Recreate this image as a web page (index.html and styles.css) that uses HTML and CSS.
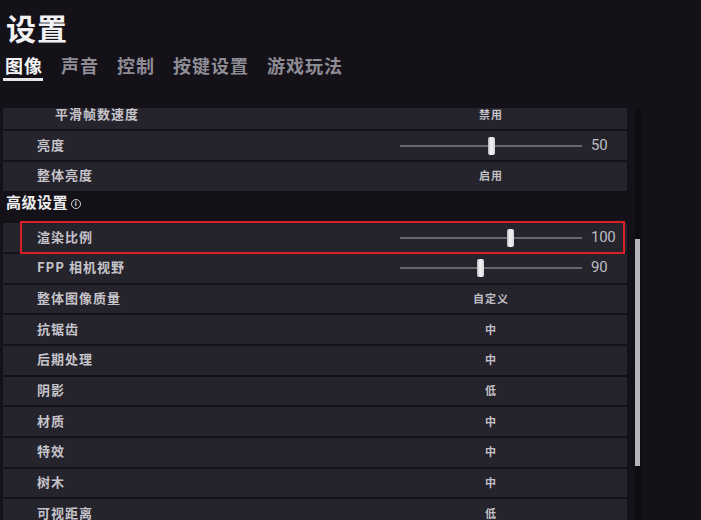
FILE: index.html
```html
<!DOCTYPE html>
<html lang="zh-CN">
<head>
    <meta charset="UTF-8">
    <meta name="viewport" content="width=device-width, initial-scale=1.0">
    <title>设置</title>
    <link rel="stylesheet" href="styles.css">
</head>
<body>
    <div class="header">
        <h1 class="title">设置</h1>
        <div class="tabs">
            <span class="tab active">图像</span>
            <span class="tab">声音</span>
            <span class="tab">控制</span>
            <span class="tab">按键设置</span>
            <span class="tab">游戏玩法</span>
        </div>
    </div>

    <div class="content">
        <div class="list">
            <div class="row sub">
                <span class="label">平滑帧数速度</span>
                <span class="value">禁用</span>
            </div>
            <div class="row">
                <span class="label">亮度</span>
                <div class="slider"><span class="thumb" style="left: 50%;"></span></div>
                <span class="number">50</span>
            </div>
            <div class="row">
                <span class="label">整体亮度</span>
                <span class="value">启用</span>
            </div>

            <div class="group-title">高级设置<span class="info">i</span></div>

            <!-- 红框标注 -->
            <div class="row marked">
                <span class="label">渲染比例</span>
                <div class="slider"><span class="thumb" style="left: 60.5%;"></span></div>
                <span class="number">100</span>
            </div>
            <div class="row">
                <span class="label">FPP 相机视野</span>
                <div class="slider"><span class="thumb" style="left: 44%;"></span></div>
                <span class="number">90</span>
            </div>
            <div class="row">
                <span class="label">整体图像质量</span>
                <span class="value">自定义</span>
            </div>
            <div class="row">
                <span class="label">抗锯齿</span>
                <span class="value">中</span>
            </div>
            <div class="row">
                <span class="label">后期处理</span>
                <span class="value">中</span>
            </div>
            <div class="row">
                <span class="label">阴影</span>
                <span class="value">低</span>
            </div>
            <div class="row">
                <span class="label">材质</span>
                <span class="value">中</span>
            </div>
            <div class="row">
                <span class="label">特效</span>
                <span class="value">中</span>
            </div>
            <div class="row">
                <span class="label">树木</span>
                <span class="value">中</span>
            </div>
            <div class="row">
                <span class="label">可视距离</span>
                <span class="value">低</span>
            </div>
        </div>

        <div class="scrollbar">
            <div class="scroll-thumb"></div>
        </div>
    </div>
</body>
</html>
```

FILE: styles.css
```css
body {
    margin: 0;
    padding: 0;
    width: 701px;
    height: 520px;
    overflow: hidden;
    background-color: #151119;
    font-family: "Noto Sans CJK SC", "Noto Sans", sans-serif;
    color: #c4c2c8;
}

.header {
    height: 108px;
    box-sizing: border-box;
    padding-top: 11px;
}

.title {
    margin: 0;
    padding-left: 6px;
    font-size: 30px;
    line-height: 32px;
    font-weight: 700;
    letter-spacing: 1px;
    color: #f2f2f4;
}

.tabs {
    display: flex;
    gap: 18px;
    margin-top: 12px;
    padding-left: 5px;
}

.tab {
    font-size: 18px;
    line-height: 20px;
    font-weight: 700;
    letter-spacing: 1px;
    color: #8e8c94;
    padding-bottom: 3px;
}

.tab.active {
    color: #f4f4f6;
    border-bottom: 3px solid #e6e6e8;
    margin-left: -2px;
    padding-left: 2px;
}

.content {
    display: flex;
    height: 412px;
    overflow: hidden;
}

.list {
    width: 624px;
    margin-left: 3px;
    margin-top: -7.5px;
    display: flex;
    flex-direction: column;
    gap: 2px;
}

.row {
    position: relative;
    flex: none;
    height: 28.7px;
    box-sizing: border-box;
    display: flex;
    align-items: center;
    background-color: #25232b;
    padding-left: 34px;
    padding-bottom: 2px;
}

.label {
    width: 363px;
    box-sizing: border-box;
    font-size: 13px;
    line-height: 16px;
    font-weight: 700;
    letter-spacing: 1px;
    color: #c6c4ca;
    white-space: nowrap;
}

.row.sub .label {
    padding-left: 18px;
}

.value {
    width: 182px;
    text-align: center;
    font-size: 11px;
    line-height: 14px;
    font-weight: 700;
    letter-spacing: 1px;
    color: #c2c0c6;
}

.slider {
    position: relative;
    width: 182px;
    height: 18px;
    margin-top: 2px;
}

.slider::before {
    content: "";
    position: absolute;
    left: 0;
    right: 0;
    top: 8px;
    height: 2px;
    background-color: #67656d;
}

.thumb {
    position: absolute;
    top: 0;
    width: 7px;
    height: 18px;
    margin-left: -3.5px;
    border-radius: 2px;
    background: linear-gradient(to right, #b9b8bd, #f4f4f6 40%, #d8d7dc);
}

.number {
    margin-left: 9px;
    font-family: Roboto, "Liberation Sans", sans-serif;
    font-size: 15px;
    line-height: 18px;
    letter-spacing: -0.3px;
    color: #bebcc2;
}

.group-title {
    flex: none;
    height: 28.7px;
    box-sizing: border-box;
    padding-left: 3px;
    display: flex;
    align-items: flex-start;
    font-size: 15px;
    line-height: 18px;
    font-weight: 700;
    letter-spacing: 0.5px;
    color: #eeeef0;
}

.info {
    display: inline-block;
    width: 8px;
    height: 8px;
    margin-top: 6px;
    margin-left: 3px;
    border: 1px solid #d0d0d4;
    border-radius: 50%;
    font-family: "DejaVu Sans", sans-serif;
    font-size: 7px;
    line-height: 8px;
    text-align: center;
    color: #d0d0d4;
}

/* 标注框 */
.row.marked::after {
    content: "";
    position: absolute;
    left: 17px;
    right: 2px;
    top: -2.3px;
    bottom: -2px;
    border: 2px solid #dc1f27;
}

.scrollbar {
    width: 6px;
    margin-left: 8px;
    background-color: #0f0d12;
}

.scroll-thumb {
    width: 5px;
    height: 227px;
    margin-top: 131px;
    background-color: #b6b5ba;
}
```
